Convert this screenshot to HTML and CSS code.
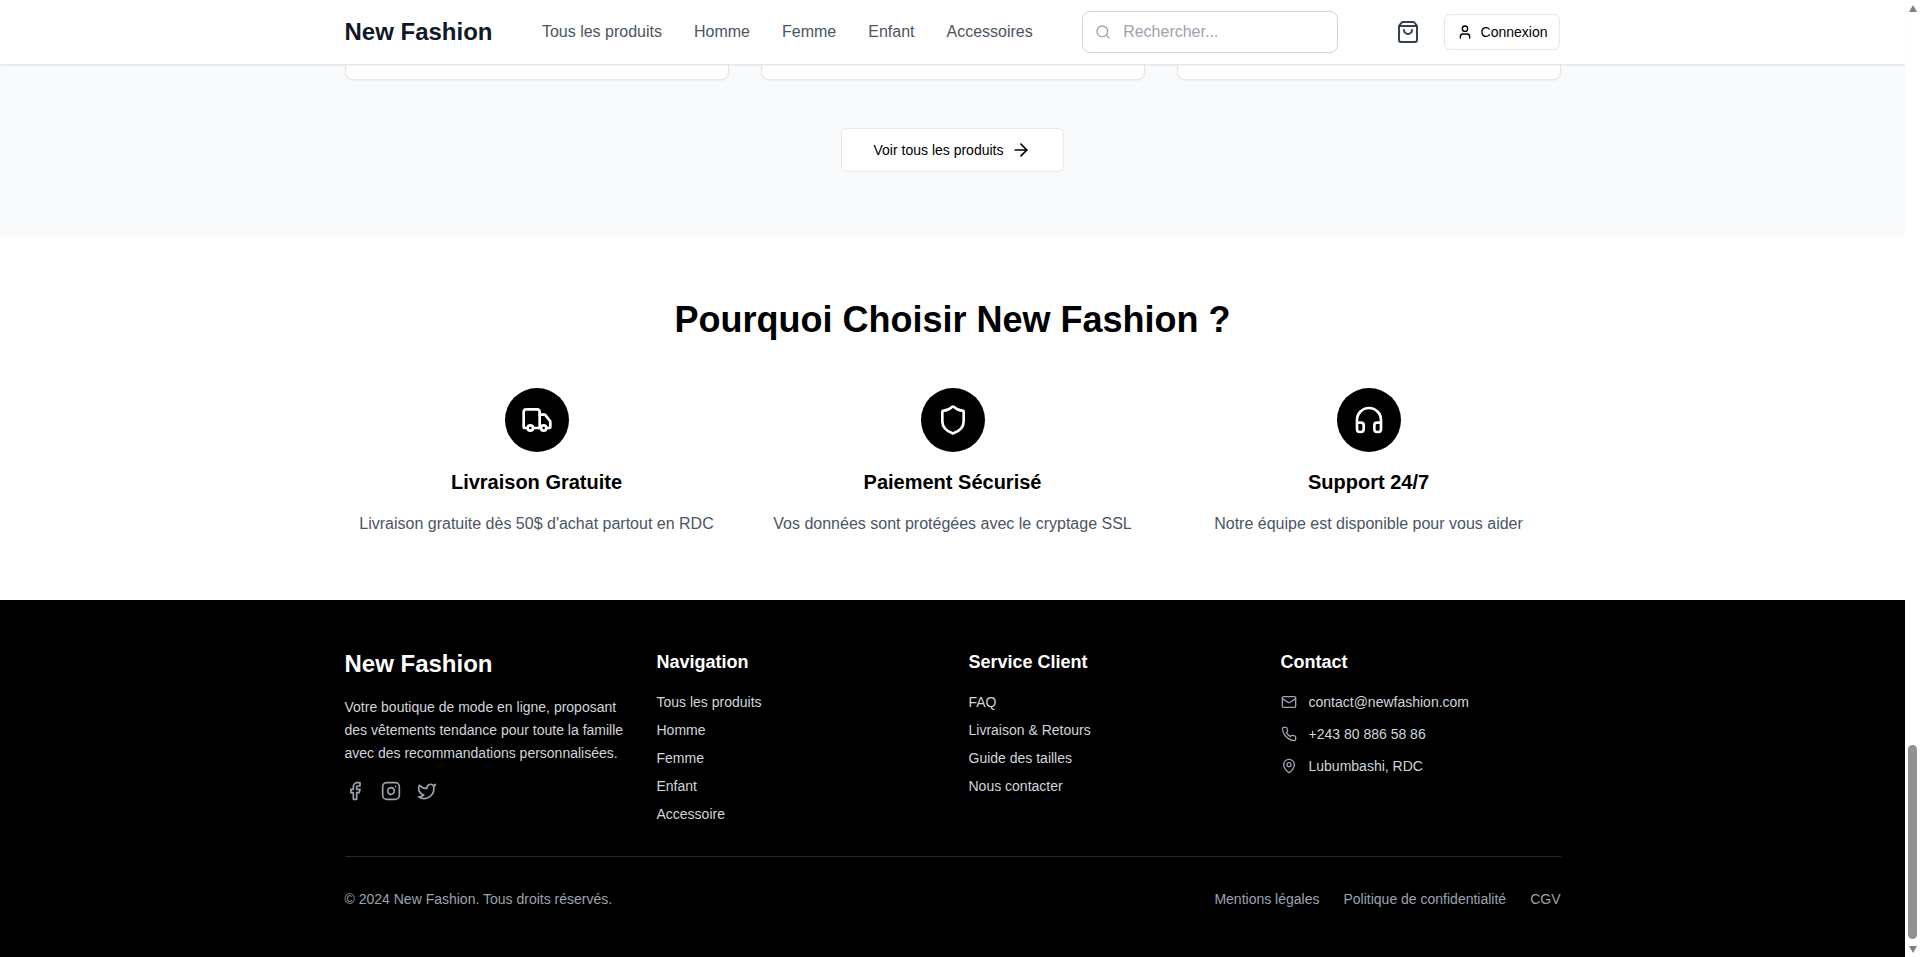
FILE: index.html
```html
<!DOCTYPE html>
<html lang="fr">
<head>
  <meta charset="UTF-8">
  <meta name="viewport" content="width=device-width, initial-scale=1.0">
  <title>New Fashion</title>
  <link rel="stylesheet" href="styles.css">
</head>
<body>
  <div class="window">
    <div class="page">
      <header class="site-header">
        <div class="container header-row">
          <a class="logo" href="#">New Fashion</a>
          <nav class="main-nav">
            <a href="#">Tous les produits</a>
            <a href="#">Homme</a>
            <a href="#">Femme</a>
            <a href="#">Enfant</a>
            <a href="#">Accessoires</a>
          </nav>
          <div class="search">
            <svg class="icon icon-16" viewBox="0 0 24 24"><path d="m21 21-4.34-4.34"/><circle cx="11" cy="11" r="8"/></svg>
            <input type="text" placeholder="Rechercher...">
          </div>
          <div class="actions">
            <button class="cart-btn" aria-label="Panier">
              <svg class="icon icon-24" viewBox="0 0 24 24"><path d="M16 10a4 4 0 0 1-8 0"/><path d="M3.103 6.034h17.794"/><path d="M3.4 5.467a2 2 0 0 0-.4 1.2V20a2 2 0 0 0 2 2h14a2 2 0 0 0 2-2V6.667a2 2 0 0 0-.4-1.2l-2.4-3.2A2 2 0 0 0 17 2H7a2 2 0 0 0-1.6.8z"/></svg>
            </button>
            <a class="login-btn" href="#">
              <svg class="icon icon-16" viewBox="0 0 24 24"><path d="M19 21v-2a4 4 0 0 0-4-4H9a4 4 0 0 0-4 4v2"/><circle cx="12" cy="7" r="4"/></svg>
              Connexion
            </a>
          </div>
        </div>
      </header>

      <section class="products">
        <div class="container">
          <div class="product-grid">
            <div class="product-card"></div>
            <div class="product-card"></div>
            <div class="product-card"></div>
          </div>
          <div class="all-products">
            <a class="outline-btn" href="#">
              Voir tous les produits
              <svg class="icon icon-20" viewBox="0 0 24 24"><path d="M5 12h14"/><path d="m12 5 7 7-7 7"/></svg>
            </a>
          </div>
        </div>
      </section>

      <section class="features">
        <div class="container">
          <h2>Pourquoi Choisir New Fashion ?</h2>
          <div class="feature-grid">
            <div class="feature">
              <div class="feature-icon">
                <svg class="icon icon-32" viewBox="0 0 24 24"><path d="M14 18V6a2 2 0 0 0-2-2H4a2 2 0 0 0-2 2v11a1 1 0 0 0 1 1h2"/><path d="M15 18H9"/><path d="M19 18h2a1 1 0 0 0 1-1v-3.65a1 1 0 0 0-.22-.624l-3.48-4.35A1 1 0 0 0 17.52 8H14"/><circle cx="17" cy="18" r="2"/><circle cx="7" cy="18" r="2"/></svg>
              </div>
              <h3>Livraison Gratuite</h3>
              <p>Livraison gratuite dès 50$ d'achat partout en RDC</p>
            </div>
            <div class="feature">
              <div class="feature-icon">
                <svg class="icon icon-32" viewBox="0 0 24 24"><path d="M20 13c0 5-3.5 7.5-7.66 8.95a1 1 0 0 1-.67-.01C7.5 20.5 4 18 4 13V6a1 1 0 0 1 1-1c2 0 4.5-1.2 6.24-2.72a1.17 1.17 0 0 1 1.52 0C14.51 3.81 17 5 19 5a1 1 0 0 1 1 1z"/></svg>
              </div>
              <h3>Paiement Sécurisé</h3>
              <p>Vos données sont protégées avec le cryptage SSL</p>
            </div>
            <div class="feature">
              <div class="feature-icon">
                <svg class="icon icon-32" viewBox="0 0 24 24"><path d="M3 14h3a2 2 0 0 1 2 2v3a2 2 0 0 1-2 2H5a2 2 0 0 1-2-2v-7a9 9 0 0 1 18 0v7a2 2 0 0 1-2 2h-1a2 2 0 0 1-2-2v-3a2 2 0 0 1 2-2h3"/></svg>
              </div>
              <h3>Support 24/7</h3>
              <p>Notre équipe est disponible pour vous aider</p>
            </div>
          </div>
        </div>
      </section>

      <footer class="site-footer">
        <div class="container">
          <div class="footer-grid">
            <div>
              <div class="footer-logo">New Fashion</div>
              <p class="footer-about">Votre boutique de mode en ligne, proposant des vêtements tendance pour toute la famille avec des recommandations personnalisées.</p>
              <div class="socials">
                <svg class="icon icon-20" viewBox="0 0 24 24"><path d="M18 2h-3a5 5 0 0 0-5 5v3H7v4h3v8h4v-8h3l1-4h-4V7a1 1 0 0 1 1-1h3z"/></svg>
                <svg class="icon icon-20" viewBox="0 0 24 24"><rect x="2" y="2" width="20" height="20" rx="5" ry="5"/><path d="M16 11.37A4 4 0 1 1 12.63 8 4 4 0 0 1 16 11.37z"/><line x1="17.5" y1="6.5" x2="17.51" y2="6.5"/></svg>
                <svg class="icon icon-20" viewBox="0 0 24 24"><path d="M22 4s-.7 2.1-2 3.4c1.6 10-9.4 17.3-18 11.6 2.2.1 4.4-.6 6-2C3 15.5.5 9.6 3 5c2.2 2.6 5.6 4.1 9 4-.9-4.2 4-6.6 7-3.8 1.1 0 3-1.2 3-1.2z"/></svg>
              </div>
            </div>
            <div>
              <h4>Navigation</h4>
              <ul class="footer-links">
                <li><a href="#">Tous les produits</a></li>
                <li><a href="#">Homme</a></li>
                <li><a href="#">Femme</a></li>
                <li><a href="#">Enfant</a></li>
                <li><a href="#">Accessoire</a></li>
              </ul>
            </div>
            <div>
              <h4>Service Client</h4>
              <ul class="footer-links">
                <li><a href="#">FAQ</a></li>
                <li><a href="#">Livraison &amp; Retours</a></li>
                <li><a href="#">Guide des tailles</a></li>
                <li><a href="#">Nous contacter</a></li>
              </ul>
            </div>
            <div>
              <h4>Contact</h4>
              <ul class="contact-list">
                <li>
                  <svg class="icon icon-16" viewBox="0 0 24 24"><rect x="2" y="4" width="20" height="16" rx="2"/><path d="m22 7-8.97 5.7a1.94 1.94 0 0 1-2.06 0L2 7"/></svg>
                  contact@newfashion.com
                </li>
                <li>
                  <svg class="icon icon-16" viewBox="0 0 24 24"><path d="M22 16.92v3a2 2 0 0 1-2.18 2 19.79 19.79 0 0 1-8.63-3.07 19.5 19.5 0 0 1-6-6 19.79 19.79 0 0 1-3.07-8.67A2 2 0 0 1 4.11 2h3a2 2 0 0 1 2 1.72 12.84 12.84 0 0 0 .7 2.81 2 2 0 0 1-.45 2.11L8.09 9.91a16 16 0 0 0 6 6l1.27-1.27a2 2 0 0 1 2.11-.45 12.84 12.84 0 0 0 2.81.7A2 2 0 0 1 22 16.92z"/></svg>
                  +243 80 886 58 86
                </li>
                <li>
                  <svg class="icon icon-16" viewBox="0 0 24 24"><path d="M20 10c0 4.993-5.539 10.193-7.399 11.799a1 1 0 0 1-1.202 0C9.539 20.193 4 14.993 4 10a8 8 0 0 1 16 0"/><circle cx="12" cy="10" r="3"/></svg>
                  Lubumbashi, RDC
                </li>
              </ul>
            </div>
          </div>
          <div class="footer-bottom">
            <span>© 2024 New Fashion. Tous droits réservés.</span>
            <div class="legal-links">
              <a href="#">Mentions légales</a>
              <a href="#">Politique de confidentialité</a>
              <a href="#">CGV</a>
            </div>
          </div>
        </div>
      </footer>
    </div>

    <div class="scrollbar">
      <div class="arrow-up"></div>
      <div class="thumb"></div>
      <div class="arrow-down"></div>
    </div>
  </div>
</body>
</html>
```

FILE: styles.css
```css
* {
  box-sizing: border-box;
}
html, body {
  margin: 0;
  height: 957px;
  overflow: hidden;
}
body {
  font-family: "Liberation Sans", Arial, sans-serif;
  font-size: 16px;
  line-height: 24px;
  color: #111827;
  background: #fff;
}
a {
  color: inherit;
  text-decoration: none;
}
ul {
  list-style: none;
  margin: 0;
  padding: 0;
}
h2, h3, h4, p {
  margin: 0;
}
.window {
  display: flex;
  height: 957px;
}
.page {
  width: 1905px;
  flex: none;
}
.container {
  width: 1216px;
  margin: 0 auto;
}

/* lucide style line icons */
.icon {
  fill: none;
  stroke: currentColor;
  stroke-width: 2;
  stroke-linecap: round;
  stroke-linejoin: round;
  flex: none;
  display: block;
}
.icon-16 { width: 16px; height: 16px; }
.icon-20 { width: 20px; height: 20px; }
.icon-24 { width: 24px; height: 24px; }
.icon-32 { width: 32px; height: 32px; }

/* header */
.site-header {
  position: relative;
  z-index: 2;
  height: 65px;
  background: #fff;
  border-bottom: 1px solid #e5e7eb;
  box-shadow: 0 1px 2px rgba(0, 0, 0, 0.05);
}
.header-row {
  display: flex;
  align-items: center;
  justify-content: space-between;
  height: 64px;
}
.logo {
  font-size: 24px;
  line-height: 32px;
  font-weight: 700;
  color: #111827;
}
.main-nav {
  display: flex;
  gap: 32px;
  color: #4b5563;
}
.search {
  display: flex;
  align-items: center;
  gap: 12px;
  width: 256px;
  height: 42px;
  padding: 0 12px;
  border: 1px solid #d1d5db;
  border-radius: 8px;
  color: #9ca3af;
}
.search input {
  flex: 1;
  min-width: 0;
  border: none;
  outline: none;
  padding: 0;
  background: none;
  font: inherit;
  color: #111827;
}
.search input::placeholder {
  color: #9ca3af;
  opacity: 1;
}
.actions {
  display: flex;
  align-items: center;
  gap: 16px;
}
.cart-btn {
  display: flex;
  padding: 8px;
  border: none;
  background: none;
  color: #374151;
}
.login-btn {
  display: flex;
  align-items: center;
  gap: 8px;
  height: 36px;
  padding: 0 12px;
  border: 1px solid #e5e7eb;
  border-radius: 6px;
  background: #fff;
  font-size: 14px;
  line-height: 20px;
  color: #000;
}

/* products */
.products {
  background: #f9fafb;
  padding-bottom: 64px;
}
.product-grid {
  display: grid;
  grid-template-columns: repeat(3, 1fr);
  gap: 32px;
}
.product-card {
  height: 15px;
  background: #fff;
  border: 1px solid #e5e7eb;
  border-top: none;
  border-radius: 0 0 8px 8px;
  box-shadow: 0 1px 2px rgba(0, 0, 0, 0.05);
}
.all-products {
  display: flex;
  justify-content: center;
  margin-top: 48px;
}
.outline-btn {
  display: flex;
  align-items: center;
  gap: 8px;
  height: 44px;
  padding: 0 32px;
  background: #fff;
  border: 1px solid #e5e7eb;
  border-radius: 6px;
  font-size: 14px;
  line-height: 20px;
  color: #000;
}

/* features */
.features {
  padding: 64px 0;
  background: #fff;
  color: #000;
}
.features h2 {
  font-size: 36px;
  line-height: 40px;
  font-weight: 700;
  text-align: center;
  margin-bottom: 48px;
}
.feature-grid {
  display: grid;
  grid-template-columns: repeat(3, 1fr);
  gap: 32px;
}
.feature {
  display: flex;
  flex-direction: column;
  align-items: center;
  text-align: center;
}
.feature-icon {
  display: flex;
  align-items: center;
  justify-content: center;
  width: 64px;
  height: 64px;
  margin-bottom: 16px;
  border-radius: 50%;
  background: #000;
  color: #fff;
}
.feature h3 {
  font-size: 20px;
  line-height: 28px;
  font-weight: 700;
  margin-bottom: 16px;
}
.feature p {
  color: #4b5563;
}

/* footer */
.site-footer {
  height: 357px;
  padding: 48px 0;
  background: #000;
  color: #fff;
}
.footer-grid {
  display: grid;
  grid-template-columns: repeat(4, 1fr);
  gap: 32px;
  height: 208px;
}
.footer-logo {
  font-size: 24px;
  line-height: 32px;
  font-weight: 700;
  margin-bottom: 16px;
}
.footer-about {
  font-size: 14px;
  line-height: 22.75px;
  color: #d1d5db;
}
.socials {
  display: flex;
  gap: 16px;
  margin-top: 17px;
  color: #9ca3af;
}
.site-footer h4 {
  font-size: 18px;
  line-height: 28px;
  font-weight: 700;
  margin-bottom: 16px;
}
.footer-links {
  display: flex;
  flex-direction: column;
  gap: 8px;
  font-size: 14px;
  line-height: 20px;
  color: #d1d5db;
}
.contact-list {
  display: flex;
  flex-direction: column;
  gap: 12px;
  font-size: 14px;
  line-height: 20px;
  color: #d1d5db;
}
.contact-list li {
  display: flex;
  align-items: center;
  gap: 12px;
}
.contact-list .icon {
  color: #9ca3af;
}
.footer-bottom {
  display: flex;
  justify-content: space-between;
  align-items: center;
  padding-top: 32px;
  border-top: 1px solid #1f2937;
  font-size: 14px;
  line-height: 20px;
  color: #9ca3af;
}
.legal-links {
  display: flex;
  gap: 24px;
}

/* drawn browser scrollbar, the page is shown scrolled to its end */
.scrollbar {
  flex: none;
  width: 15px;
  height: 957px;
  display: flex;
  flex-direction: column;
  align-items: center;
  background: #fff;
  padding: 5px 0 4px;
}
.arrow-up, .arrow-down {
  width: 0;
  height: 0;
  border-left: 4.5px solid transparent;
  border-right: 4.5px solid transparent;
}
.arrow-up {
  border-bottom: 7px solid #808080;
}
.arrow-down {
  border-top: 7px solid #808080;
  margin-top: 7px;
}
.thumb {
  width: 9px;
  height: 194px;
  margin-top: auto;
  border-radius: 5px;
  background: #919191;
}
```
